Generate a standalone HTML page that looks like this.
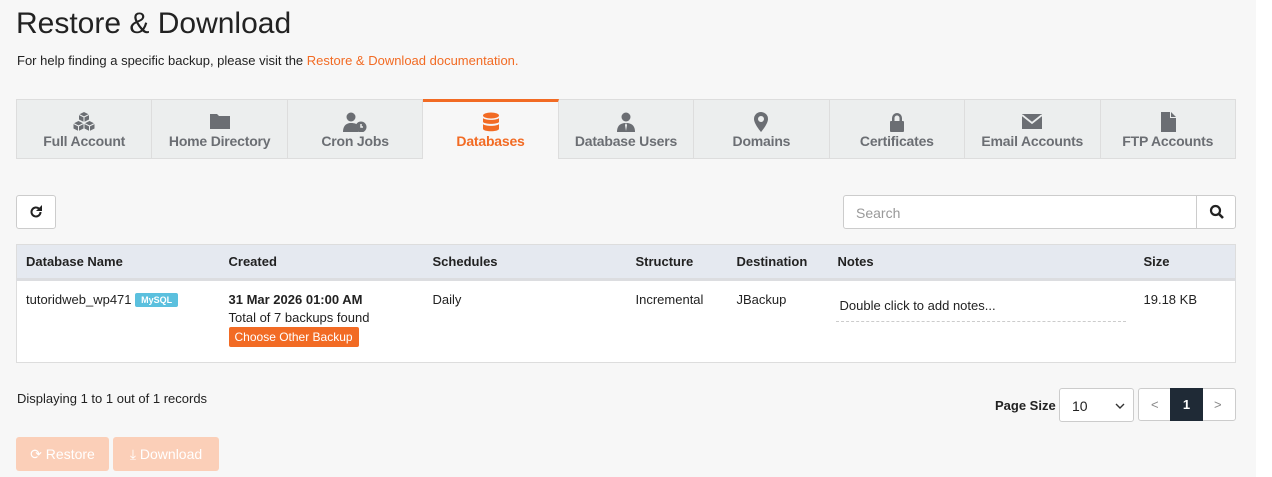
<!DOCTYPE html><html><head><style>
body{margin:0;width:1272px;height:477px;background:#f7f7f7;font-family:"Liberation Sans",sans-serif;color:#222;position:relative;overflow:hidden;font-size:13px}
.r{position:absolute;right:0;top:0;width:16px;height:477px;background:#fff}
h1{position:absolute;left:16px;top:7px;margin:0;font-size:30px;font-weight:normal;color:#222}
.help{position:absolute;left:17px;top:53px;font-size:13px}
.help span{color:#f26b24}
.tabs{position:absolute;left:16px;top:99px;width:1220px;height:60px;display:flex}
.tab{flex:1;background:#eceeee;border:1px solid #ddd;border-left:none;box-sizing:border-box;text-align:center;color:#6b6e73;font-weight:bold;font-size:14px;position:relative;letter-spacing:-0.2px}
.tab:first-child{border-left:1px solid #ddd}
.tab svg{position:absolute;left:50%;top:12px;transform:translateX(-50%)}
.tab .t{position:absolute;left:0;right:0;top:33px}
.tab.a{background:#f7f7f7;border-top:3px solid #f26b24;border-bottom:none;color:#f26b24}
.tab.a svg{top:10px}.tab.a .t{top:31px}
.btn{position:absolute;background:#fff;border:1px solid #ccc;border-radius:3px;box-sizing:border-box}
table{position:absolute;left:16px;top:244px;width:1220px;border-collapse:collapse;background:#fff;border:1px solid #ddd;table-layout:fixed}
th{background:#e5e9f0;text-align:left;font-size:13px;height:33px;border-bottom:3px solid #dcdde0;padding:0 0 0 9px}
td{vertical-align:top;padding:11px 0 0 9px;height:83px;box-sizing:border-box}
.my{display:inline-block;background:#5bc0de;color:#fff;font-size:9px;font-weight:bold;padding:2px 6px;border-radius:2px;vertical-align:1px}
.cob{display:inline-block;background:#f26b24;color:#fff;font-size:12px;padding:3px 6px;border-radius:2px;margin-top:2px}
</style></head><body><div class="r"></div>
<h1>Restore &amp; Download</h1>
<div class="help">For help finding a specific backup, please visit the <span>Restore &amp; Download documentation.</span></div>
<div class="tabs">
<div class="tab"><svg width="22" height="20" viewBox="0 0 22 20" fill="#6b6e73"><path d="M11 0l5 2.5v5L11 10 6 7.5v-5z M5.5 9l5 2.5v5L5.5 19 .5 16.5v-5z M16.5 9l5 2.5v5l-5 2.5-5-2.5v-5z"/><path d="M11 5l-5-2.5M11 5l5-2.5M11 5v5M5.5 14l-5-2.5M5.5 14l5-2.5M5.5 14v5M16.5 14l-5-2.5M16.5 14l5-2.5M16.5 14v5" stroke="#eceeee" stroke-width="1"/></svg><div class="t">Full Account</div></div>
<div class="tab"><svg width="22" height="18" viewBox="0 0 22 18" fill="#6b6e73"><path d="M1 2h7l2 2h11v13H1z"/></svg><div class="t">Home Directory</div></div>
<div class="tab"><svg width="26" height="20" viewBox="0 0 26 20" fill="#6b6e73"><circle cx="9" cy="5" r="4.5"/><path d="M1 20c0-7 4-9 8-9s6 1 7 3v6z"/><circle cx="19" cy="15" r="5.5"/><path d="M19 12v3h2" stroke="#eceeee" stroke-width="1.5" fill="none"/></svg><div class="t">Cron Jobs</div></div>
<div class="tab a"><svg width="18" height="22" viewBox="0 0 18 22" fill="#f26b24"><ellipse cx="9" cy="3.5" rx="8" ry="3"/><path d="M1 6c2 2.5 14 2.5 16 0v4c-2 2.5-14 2.5-16 0z M1 12c2 2.5 14 2.5 16 0v5c-1 3-15 3-16 0z"/></svg><div class="t">Databases</div></div>
<div class="tab"><svg width="18" height="20" viewBox="0 0 18 20" fill="#6b6e73"><circle cx="9" cy="5" r="4.5"/><path d="M0 20c0-7 4-9 9-9s9 2 9 9z"/><path d="M9 11l-1 2 1 6 1-6z" fill="#eceeee"/></svg><div class="t">Database Users</div></div>
<div class="tab"><svg width="16" height="20" viewBox="0 0 16 20" fill="#6b6e73"><path d="M8 0a7 7 0 0 1 7 7c0 5-7 13-7 13S1 12 1 7a7 7 0 0 1 7-7z"/><circle cx="8" cy="7" r="3" fill="#eceeee"/></svg><div class="t">Domains</div></div>
<div class="tab"><svg width="16" height="20" viewBox="0 0 16 20" fill="#6b6e73"><path d="M3 9V6a5 5 0 0 1 10 0v3h-2.5V6a2.5 2.5 0 0 0-5 0v3z"/><rect x="1" y="9" width="14" height="11" rx="1"/></svg><div class="t">Certificates</div></div>
<div class="tab"><svg width="22" height="18" viewBox="0 0 22 18" fill="#6b6e73"><path d="M1 2h20v15H1z"/><path d="M1 3l10 8 10-8" stroke="#eceeee" stroke-width="1.8" fill="none"/></svg><div class="t">Email Accounts</div></div>
<div class="tab"><svg width="16" height="20" viewBox="0 0 16 20" fill="#6b6e73"><path d="M1 0h9v6h6v14H1z M11 0l5 5h-5z"/></svg><div class="t">FTP Accounts</div></div>
</div>
<div class="btn" style="left:16px;top:195px;width:40px;height:34px"><svg width="14" height="14" viewBox="0 0 14 14" style="position:absolute;left:12px;top:9px"><path d="M11.5 7a4.5 4.5 0 1 1-1.4-3.3" stroke="#222" stroke-width="2" fill="none"/><path d="M13 0v6H7z" fill="#222"/></svg></div>
<div class="btn" style="left:843px;top:195px;width:393px;height:34px"><span style="position:absolute;left:12px;top:9px;color:#999;font-size:14px">Search</span><div style="position:absolute;left:352px;top:0;height:32px;border-left:1px solid #ccc;width:40px"><svg width="16" height="16" viewBox="0 0 16 16" style="position:absolute;left:12px;top:8px"><circle cx="6.5" cy="6.5" r="4.5" stroke="#222" stroke-width="2.2" fill="none"/><path d="M10 10l4 4" stroke="#222" stroke-width="2.6"/></svg></div></div>
<table><colgroup><col style="width:203px"><col style="width:204px"><col style="width:203px"><col style="width:101px"><col style="width:101px"><col style="width:306px"><col></colgroup>
<tr><th>Database Name</th><th>Created</th><th>Schedules</th><th>Structure</th><th>Destination</th><th>Notes</th><th>Size</th></tr>
<tr><td>tutoridweb_wp471 <span class="my">MySQL</span></td><td><b>31 Mar 2026 01:00 AM</b><br><div style="margin-top:3px">Total of 7 backups found</div><span class="cob">Choose Other Backup</span></td><td>Daily</td><td>Incremental</td><td>JBackup</td><td><div style="margin-top:6px;width:286px;border-bottom:1px dashed #ccc;padding:0 0 8px 4px;margin-left:-2px">Double click to add notes...</div></td><td>19.18 KB</td></tr></table>
<div style="position:absolute;left:17px;top:391px;font-size:13px">Displaying 1 to 1 out of 1 records</div>
<div style="position:absolute;left:995px;top:398px;font-weight:bold;font-size:13px">Page Size</div>
<div class="btn" style="left:1059px;top:388px;width:75px;height:34px"><span style="position:absolute;left:12px;top:9px;font-size:14px">10</span><svg width="10" height="6" viewBox="0 0 10 6" style="position:absolute;right:8px;top:14px"><path d="M1 1l4 4 4-4" stroke="#333" stroke-width="1.4" fill="none"/></svg></div>
<div class="btn" style="left:1138px;top:388px;width:98px;height:33px"><span style="position:absolute;left:12px;top:8px;color:#888">&lt;</span><div style="position:absolute;left:31px;top:-1px;width:33px;height:33px;background:#1f2a36;color:#fff;font-weight:bold;text-align:center;line-height:33px">1</div><span style="position:absolute;left:75px;top:8px;color:#888">&gt;</span></div>
<div style="position:absolute;left:16px;top:437px;width:93px;height:34px;background:#fbcfb8;border-radius:3px;color:#fff;font-size:14px;line-height:34px;text-align:center">&#10227; Restore</div>
<div style="position:absolute;left:113px;top:437px;width:106px;height:34px;background:#fbcfb8;border-radius:3px;color:#fff;font-size:14px;line-height:34px;text-align:center">&#10515; Download</div>
</body></html>
